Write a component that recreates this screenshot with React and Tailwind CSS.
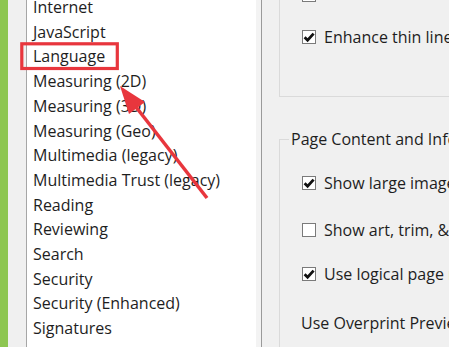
import React from 'react';

const items = [
  'Internet',
  'JavaScript',
  'Language',
  'Measuring (2D)',
  'Measuring (3D)',
  'Measuring (Geo)',
  'Multimedia (legacy)',
  'Multimedia Trust (legacy)',
  'Reading',
  'Reviewing',
  'Search',
  'Security',
  'Security (Enhanced)',
  'Signatures',
];

function Check({ checked }) {
  return (
    <span className="flex h-[14px] w-[14px] shrink-0 items-center justify-center border border-[#7a7a7a] bg-white">
      {checked && (
        <svg width="12" height="12" viewBox="0 0 12 12">
          <path d="M1.6 6.2 L4.6 9.2 L10.6 2.6" fill="none" stroke="#111" strokeWidth="2.8" />
        </svg>
      )}
    </span>
  );
}

function Row({ checked, label, className = '' }) {
  return (
    <div className={`flex items-center gap-[8px] whitespace-nowrap ${className}`}>
      <Check checked={checked} />
      <span>{label}</span>
    </div>
  );
}

export default function App() {
  return (
    <div
      className="relative flex h-[347px] w-[449px] overflow-hidden text-[16px] text-[#1e1e1e]"
      style={{ fontFamily: '"Open Sans", "Noto Sans", sans-serif' }}
    >
      <div className="w-[8px] shrink-0 bg-[#8dc651]" />
      <div className="w-[19px] shrink-0 border-r border-[#a6a6a6] bg-[#f0f0f0]" />

      <div className="w-[229px] shrink-0 bg-white pl-[6px]">
        <ul className="mt-[-5px] leading-[24.7px]">
          {items.map((it) => (
            <li key={it} className="whitespace-nowrap">{it}</li>
          ))}
        </ul>
      </div>

      <div className="w-[6px] shrink-0 border-r border-[#9a9a9a] bg-[#f3f3f3]" />

      <div className="flex-1 bg-[#f0f0f0] pl-[17px]">
        <div className="h-[109px] border-b border-l border-[#dadada] pl-[22px]">
          <Row checked={false} label="" className="mt-[-12px]" />
          <Row checked label="Enhance thin lines" className="mt-[23px]" />
        </div>

        <fieldset className="mt-[32px] border border-[#dadada] pb-4 pl-[22px]">
          <legend className="ml-[-13px] px-[2px] leading-[20px]">Page Content and Information</legend>
          <Row checked label="Show large images" className="mt-[22px]" />
          <Row checked={false} label="Show art, trim, & bleed boxes" className="mt-[23px]" />
          <Row checked label="Use logical page numbers" className="mt-[20px]" />
          <div className="mt-[25px] ml-[-1px] whitespace-nowrap">Use Overprint Preview</div>
        </fieldset>
      </div>

      <svg className="pointer-events-none absolute left-0 top-0" width="449" height="347">
        <rect x="21.8" y="43.8" width="95.5" height="24.7" fill="none" stroke="#e8363d" strokeWidth="3.2" />
        <polygon points="120,86 145,102 129,114" fill="#e8363d" />
        <line x1="136" y1="107" x2="207" y2="198" stroke="#e8363d" strokeWidth="3.5" />
      </svg>
    </div>
  );
}
